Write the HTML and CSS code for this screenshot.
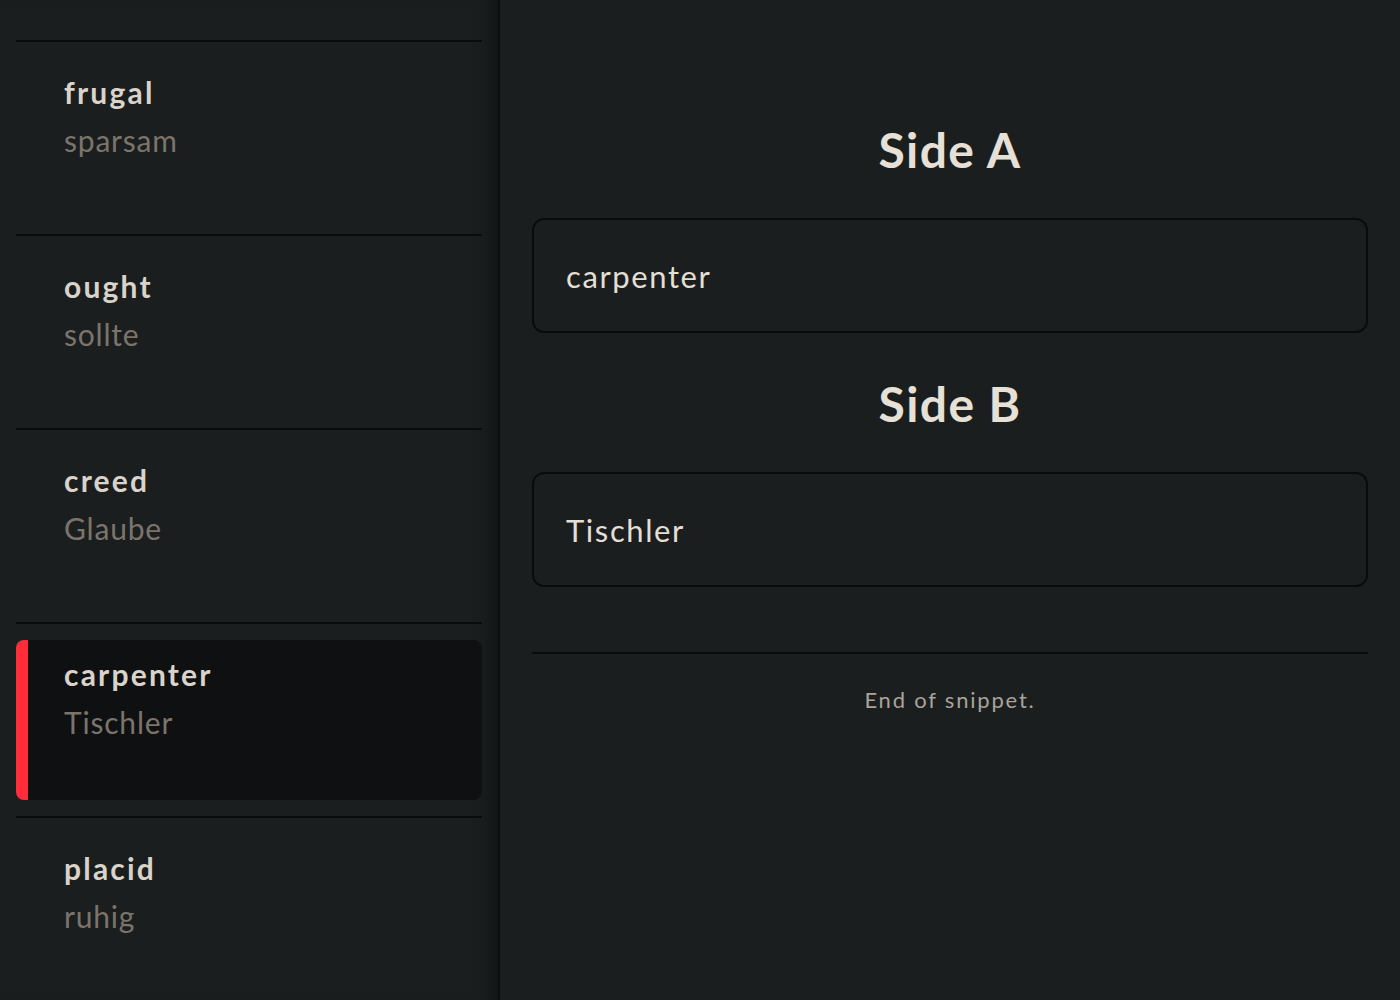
FILE: index.html
```html
<!DOCTYPE html>
<html lang="en">
<head>
<meta charset="utf-8">
<title>Cards</title>
<link rel="stylesheet" href="styles.css">
</head>
<body>
<div class="app">
  <aside class="sidebar">
    <div class="item">
      <div class="card">
        <div class="word">frugal</div>
        <div class="trans">sparsam</div>
      </div>
    </div>
    <div class="item">
      <div class="card">
        <div class="word">ought</div>
        <div class="trans">sollte</div>
      </div>
    </div>
    <div class="item">
      <div class="card">
        <div class="word">creed</div>
        <div class="trans">Glaube</div>
      </div>
    </div>
    <div class="item">
      <div class="card active">
        <div class="word">carpenter</div>
        <div class="trans">Tischler</div>
      </div>
    </div>
    <div class="item">
      <div class="card">
        <div class="word">placid</div>
        <div class="trans">ruhig</div>
      </div>
    </div>
  </aside>
  <main class="main">
    <h2 class="side-title first">Side A</h2>
    <div class="field">carpenter</div>
    <h2 class="side-title">Side B</h2>
    <div class="field">Tischler</div>
    <hr class="rule">
    <p class="end">End of snippet.</p>
  </main>
</div>
</body>
</html>
```

FILE: styles.css
```css
* { box-sizing: border-box; }
html, body {
  margin: 0;
  padding: 0;
  height: 100%;
  background: #1b1e1f;
  font-family: Lato, "Noto Sans", sans-serif;
}
.app {
  display: flex;
  height: 1000px;
  overflow: hidden;
}
.sidebar {
  width: 500px;
  flex: none;
  padding: 40px 16px 0;
  border-right: 2px solid #0b0c0d;
  box-shadow: inset -18px 0 16px -10px rgba(0, 0, 0, 0.35);
  overflow: hidden;
}
.item {
  border-top: 2px solid #0a0b0c;
  padding: 16px 0;
}
.card {
  height: 160px;
  border-radius: 8px;
  border-left: 12px solid transparent;
  padding: 14px 36px 0;
  display: flex;
  flex-direction: column;
  gap: 8px;
}
.card.active {
  background: #0f1012;
  border-left-color: #ff2d3a;
}
.word {
  font-size: 30px;
  line-height: 40px;
  font-weight: 700;
  color: #d9d3c9;
  letter-spacing: 2.2px;
}
.trans {
  font-size: 30px;
  line-height: 40px;
  color: #7b746b;
  letter-spacing: 0.8px;
}
.main {
  flex: 1;
  padding: 122px 32px 0;
  display: flex;
  flex-direction: column;
}
.side-title {
  margin: 43px 0 40px;
  text-align: center;
  font-size: 48px;
  line-height: 56px;
  font-weight: 700;
  color: #e6e0d6;
  letter-spacing: 1.4px;
}
.side-title.first { margin-top: 0; }
.field {
  height: 115px;
  border: 2px solid #0a0b0c;
  border-radius: 12px;
  padding: 0 32px;
  display: flex;
  align-items: center;
  font-size: 31px;
  color: #e4ded4;
  letter-spacing: 1.6px;
}
.rule {
  margin: 65px 0 0;
  border: 0;
  height: 2px;
  background: #0a0b0c;
}
.end {
  margin: 31px 0 0;
  text-align: center;
  font-size: 22px;
  line-height: 30px;
  color: #a9a39a;
  letter-spacing: 1.8px;
}
```
